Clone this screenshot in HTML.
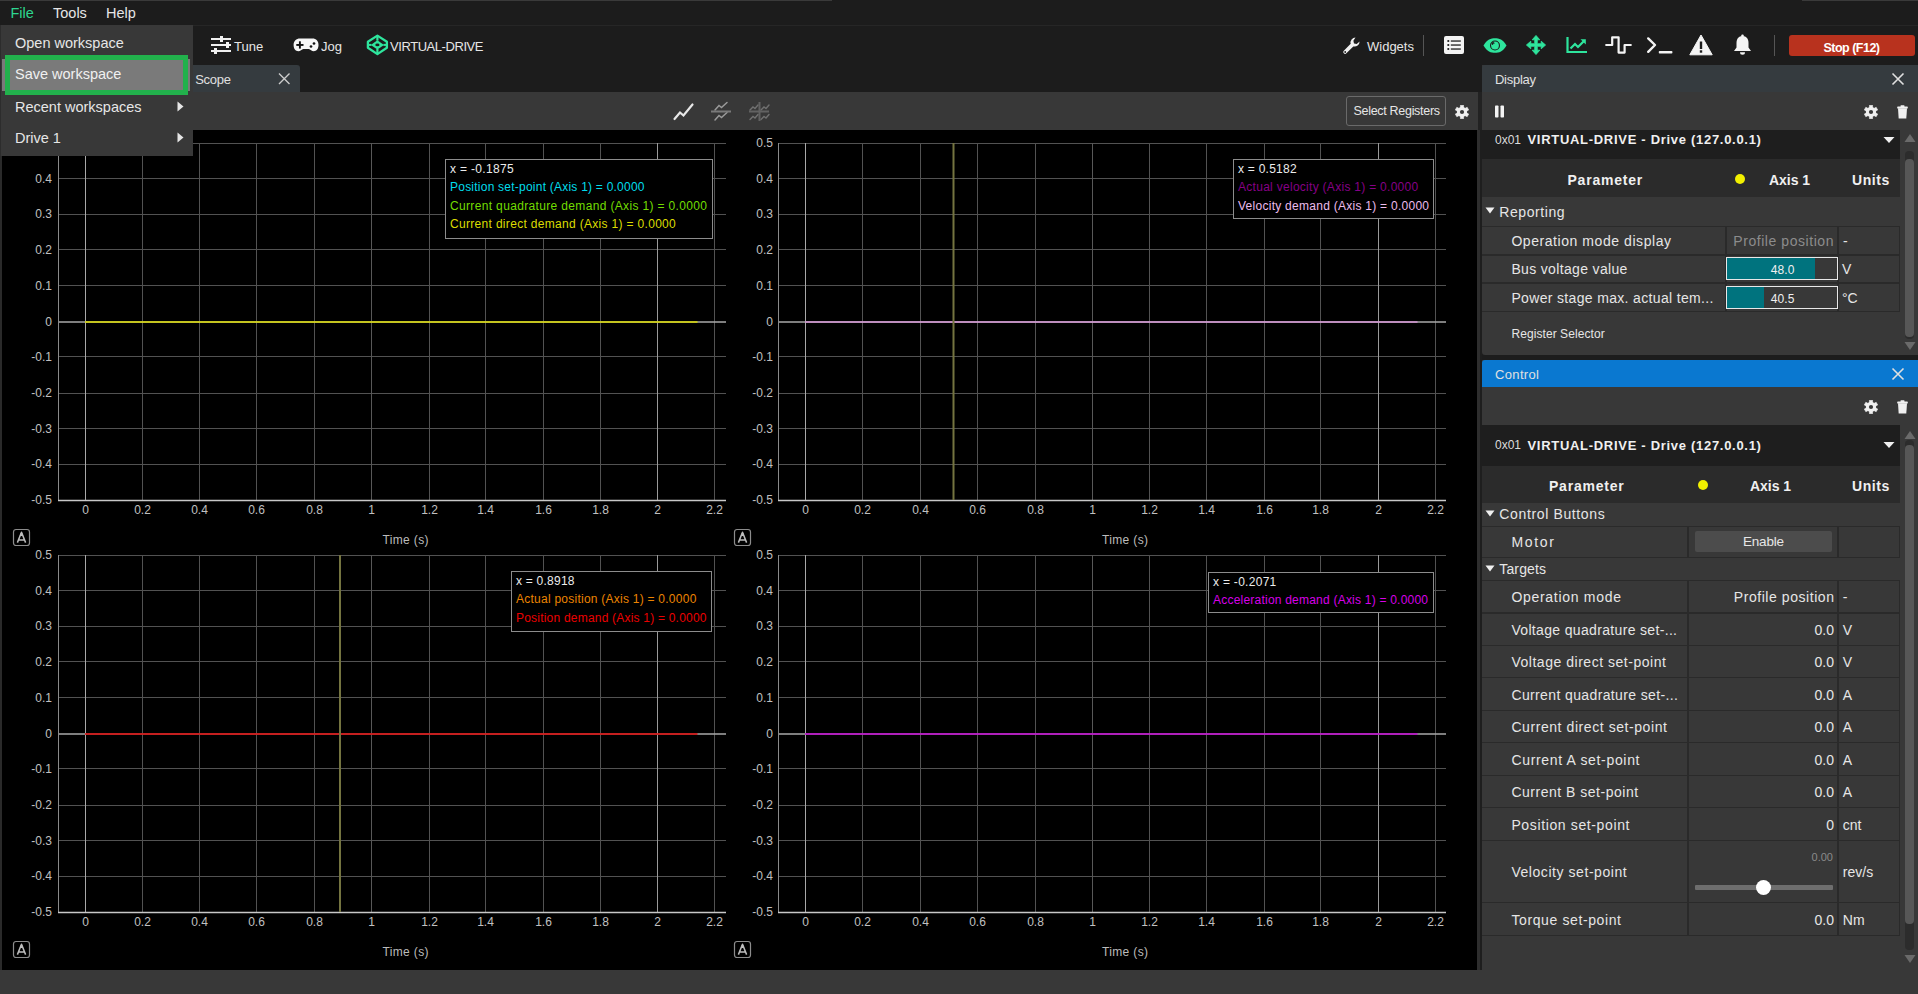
<!DOCTYPE html>
<html><head><meta charset="utf-8"><style>
html,body{margin:0;padding:0;}
body{width:1918px;height:994px;overflow:hidden;background:#1c1c1c;position:relative;font-family:"Liberation Sans", sans-serif;}
body>div{position:absolute;box-sizing:content-box;}
.t{white-space:nowrap;}
</style></head><body>
<div style="left:0px;top:0px;width:832px;height:1px;background:#3a3a3a;"></div><div style="left:1802px;top:0px;width:116px;height:1px;background:#3a3a3a;"></div><div style="left:0px;top:25px;width:1918px;height:1px;background:#262626;"></div><div style="left:0px;top:65px;width:300px;height:27px;background:#353b3f;border-top-right-radius:3px"></div><div style="left:0px;top:92px;width:1478px;height:38px;background:#383838;"></div><div style="left:0px;top:130px;width:1478px;height:840px;background:#000;"></div><div style="left:0px;top:130px;width:2px;height:840px;background:#2a2a2a;"></div><div style="left:1478px;top:92px;width:4px;height:38px;background:#222222;"></div><div style="left:1477px;top:130px;width:3px;height:840px;background:#2e2e2e;"></div><div style="left:1480px;top:130px;width:2px;height:840px;background:#1e1e1e;"></div><div style="left:0px;top:970px;width:1918px;height:24px;background:#383838;"></div><svg style="position:absolute;left:0px;top:0px;" width="1478" height="970" viewBox="0 0 1478 970"><line x1="58" y1="143.5" x2="726" y2="143.5" stroke="#525252" stroke-width="1"/><line x1="58" y1="178.5" x2="726" y2="178.5" stroke="#525252" stroke-width="1"/><line x1="58" y1="214.5" x2="726" y2="214.5" stroke="#525252" stroke-width="1"/><line x1="58" y1="249.5" x2="726" y2="249.5" stroke="#525252" stroke-width="1"/><line x1="58" y1="285.5" x2="726" y2="285.5" stroke="#525252" stroke-width="1"/><line x1="58" y1="356.5" x2="726" y2="356.5" stroke="#525252" stroke-width="1"/><line x1="58" y1="393.5" x2="726" y2="393.5" stroke="#525252" stroke-width="1"/><line x1="58" y1="428.5" x2="726" y2="428.5" stroke="#525252" stroke-width="1"/><line x1="58" y1="464.5" x2="726" y2="464.5" stroke="#525252" stroke-width="1"/><line x1="85.5" y1="143" x2="85.5" y2="500" stroke="#a8a8a8" stroke-width="1"/><line x1="142.5" y1="143" x2="142.5" y2="500" stroke="#525252" stroke-width="1"/><line x1="199.5" y1="143" x2="199.5" y2="500" stroke="#525252" stroke-width="1"/><line x1="256.5" y1="143" x2="256.5" y2="500" stroke="#525252" stroke-width="1"/><line x1="314.5" y1="143" x2="314.5" y2="500" stroke="#525252" stroke-width="1"/><line x1="371.5" y1="143" x2="371.5" y2="500" stroke="#585858" stroke-width="1"/><line x1="429.5" y1="143" x2="429.5" y2="500" stroke="#525252" stroke-width="1"/><line x1="485.5" y1="143" x2="485.5" y2="500" stroke="#525252" stroke-width="1"/><line x1="543.5" y1="143" x2="543.5" y2="500" stroke="#525252" stroke-width="1"/><line x1="600.5" y1="143" x2="600.5" y2="500" stroke="#525252" stroke-width="1"/><line x1="657.5" y1="143" x2="657.5" y2="500" stroke="#9a9a9a" stroke-width="1"/><line x1="714.5" y1="143" x2="714.5" y2="500" stroke="#525252" stroke-width="1"/><line x1="58" y1="322" x2="726" y2="322" stroke="#a8a8a8" stroke-width="1.7"/><line x1="58.5" y1="143" x2="58.5" y2="500" stroke="#8a8a8a" stroke-width="1"/><line x1="58" y1="500.5" x2="726" y2="500.5" stroke="#c8c8c8" stroke-width="1.5"/><line x1="85" y1="322" x2="697.5" y2="322" stroke="#dcdc00" stroke-width="1.7"/><line x1="778" y1="143.5" x2="1446" y2="143.5" stroke="#525252" stroke-width="1"/><line x1="778" y1="178.5" x2="1446" y2="178.5" stroke="#525252" stroke-width="1"/><line x1="778" y1="214.5" x2="1446" y2="214.5" stroke="#525252" stroke-width="1"/><line x1="778" y1="249.5" x2="1446" y2="249.5" stroke="#525252" stroke-width="1"/><line x1="778" y1="285.5" x2="1446" y2="285.5" stroke="#525252" stroke-width="1"/><line x1="778" y1="356.5" x2="1446" y2="356.5" stroke="#525252" stroke-width="1"/><line x1="778" y1="393.5" x2="1446" y2="393.5" stroke="#525252" stroke-width="1"/><line x1="778" y1="428.5" x2="1446" y2="428.5" stroke="#525252" stroke-width="1"/><line x1="778" y1="464.5" x2="1446" y2="464.5" stroke="#525252" stroke-width="1"/><line x1="805.5" y1="143" x2="805.5" y2="500" stroke="#a8a8a8" stroke-width="1"/><line x1="862.5" y1="143" x2="862.5" y2="500" stroke="#525252" stroke-width="1"/><line x1="920.5" y1="143" x2="920.5" y2="500" stroke="#525252" stroke-width="1"/><line x1="977.5" y1="143" x2="977.5" y2="500" stroke="#525252" stroke-width="1"/><line x1="1035.5" y1="143" x2="1035.5" y2="500" stroke="#525252" stroke-width="1"/><line x1="1092.5" y1="143" x2="1092.5" y2="500" stroke="#585858" stroke-width="1"/><line x1="1149.5" y1="143" x2="1149.5" y2="500" stroke="#525252" stroke-width="1"/><line x1="1206.5" y1="143" x2="1206.5" y2="500" stroke="#525252" stroke-width="1"/><line x1="1264.5" y1="143" x2="1264.5" y2="500" stroke="#525252" stroke-width="1"/><line x1="1320.5" y1="143" x2="1320.5" y2="500" stroke="#525252" stroke-width="1"/><line x1="1378.5" y1="143" x2="1378.5" y2="500" stroke="#9a9a9a" stroke-width="1"/><line x1="1435.5" y1="143" x2="1435.5" y2="500" stroke="#525252" stroke-width="1"/><line x1="778" y1="322" x2="1446" y2="322" stroke="#a8a8a8" stroke-width="1.7"/><line x1="778.5" y1="143" x2="778.5" y2="500" stroke="#8a8a8a" stroke-width="1"/><line x1="778" y1="500.5" x2="1446" y2="500.5" stroke="#c8c8c8" stroke-width="1.5"/><line x1="805" y1="322" x2="1417.5" y2="322" stroke="#d494d4" stroke-width="1.7"/><line x1="953.5" y1="143" x2="953.5" y2="500" stroke="#747440" stroke-width="2"/><line x1="58" y1="555.5" x2="726" y2="555.5" stroke="#525252" stroke-width="1"/><line x1="58" y1="590.5" x2="726" y2="590.5" stroke="#525252" stroke-width="1"/><line x1="58" y1="626.5" x2="726" y2="626.5" stroke="#525252" stroke-width="1"/><line x1="58" y1="661.5" x2="726" y2="661.5" stroke="#525252" stroke-width="1"/><line x1="58" y1="697.5" x2="726" y2="697.5" stroke="#525252" stroke-width="1"/><line x1="58" y1="768.5" x2="726" y2="768.5" stroke="#525252" stroke-width="1"/><line x1="58" y1="805.5" x2="726" y2="805.5" stroke="#525252" stroke-width="1"/><line x1="58" y1="840.5" x2="726" y2="840.5" stroke="#525252" stroke-width="1"/><line x1="58" y1="876.5" x2="726" y2="876.5" stroke="#525252" stroke-width="1"/><line x1="85.5" y1="555" x2="85.5" y2="912" stroke="#a8a8a8" stroke-width="1"/><line x1="142.5" y1="555" x2="142.5" y2="912" stroke="#525252" stroke-width="1"/><line x1="199.5" y1="555" x2="199.5" y2="912" stroke="#525252" stroke-width="1"/><line x1="256.5" y1="555" x2="256.5" y2="912" stroke="#525252" stroke-width="1"/><line x1="314.5" y1="555" x2="314.5" y2="912" stroke="#525252" stroke-width="1"/><line x1="371.5" y1="555" x2="371.5" y2="912" stroke="#585858" stroke-width="1"/><line x1="429.5" y1="555" x2="429.5" y2="912" stroke="#525252" stroke-width="1"/><line x1="485.5" y1="555" x2="485.5" y2="912" stroke="#525252" stroke-width="1"/><line x1="543.5" y1="555" x2="543.5" y2="912" stroke="#525252" stroke-width="1"/><line x1="600.5" y1="555" x2="600.5" y2="912" stroke="#525252" stroke-width="1"/><line x1="657.5" y1="555" x2="657.5" y2="912" stroke="#9a9a9a" stroke-width="1"/><line x1="714.5" y1="555" x2="714.5" y2="912" stroke="#525252" stroke-width="1"/><line x1="58" y1="734" x2="726" y2="734" stroke="#a8a8a8" stroke-width="1.7"/><line x1="58.5" y1="555" x2="58.5" y2="912" stroke="#8a8a8a" stroke-width="1"/><line x1="58" y1="912.5" x2="726" y2="912.5" stroke="#c8c8c8" stroke-width="1.5"/><line x1="85" y1="734" x2="697.5" y2="734" stroke="#dc0000" stroke-width="1.7"/><line x1="340" y1="555" x2="340" y2="912" stroke="#747440" stroke-width="2"/><line x1="778" y1="555.5" x2="1446" y2="555.5" stroke="#525252" stroke-width="1"/><line x1="778" y1="590.5" x2="1446" y2="590.5" stroke="#525252" stroke-width="1"/><line x1="778" y1="626.5" x2="1446" y2="626.5" stroke="#525252" stroke-width="1"/><line x1="778" y1="661.5" x2="1446" y2="661.5" stroke="#525252" stroke-width="1"/><line x1="778" y1="697.5" x2="1446" y2="697.5" stroke="#525252" stroke-width="1"/><line x1="778" y1="768.5" x2="1446" y2="768.5" stroke="#525252" stroke-width="1"/><line x1="778" y1="805.5" x2="1446" y2="805.5" stroke="#525252" stroke-width="1"/><line x1="778" y1="840.5" x2="1446" y2="840.5" stroke="#525252" stroke-width="1"/><line x1="778" y1="876.5" x2="1446" y2="876.5" stroke="#525252" stroke-width="1"/><line x1="805.5" y1="555" x2="805.5" y2="912" stroke="#a8a8a8" stroke-width="1"/><line x1="862.5" y1="555" x2="862.5" y2="912" stroke="#525252" stroke-width="1"/><line x1="920.5" y1="555" x2="920.5" y2="912" stroke="#525252" stroke-width="1"/><line x1="977.5" y1="555" x2="977.5" y2="912" stroke="#525252" stroke-width="1"/><line x1="1035.5" y1="555" x2="1035.5" y2="912" stroke="#525252" stroke-width="1"/><line x1="1092.5" y1="555" x2="1092.5" y2="912" stroke="#585858" stroke-width="1"/><line x1="1149.5" y1="555" x2="1149.5" y2="912" stroke="#525252" stroke-width="1"/><line x1="1206.5" y1="555" x2="1206.5" y2="912" stroke="#525252" stroke-width="1"/><line x1="1264.5" y1="555" x2="1264.5" y2="912" stroke="#525252" stroke-width="1"/><line x1="1320.5" y1="555" x2="1320.5" y2="912" stroke="#525252" stroke-width="1"/><line x1="1378.5" y1="555" x2="1378.5" y2="912" stroke="#9a9a9a" stroke-width="1"/><line x1="1435.5" y1="555" x2="1435.5" y2="912" stroke="#525252" stroke-width="1"/><line x1="778" y1="734" x2="1446" y2="734" stroke="#a8a8a8" stroke-width="1.7"/><line x1="778.5" y1="555" x2="778.5" y2="912" stroke="#8a8a8a" stroke-width="1"/><line x1="778" y1="912.5" x2="1446" y2="912.5" stroke="#c8c8c8" stroke-width="1.5"/><line x1="805" y1="734" x2="1417.5" y2="734" stroke="#c000d0" stroke-width="1.7"/></svg><div class="t" style="left:35.32px;top:134.00px;height:18px;line-height:18px;font-size:12px;color:#c0c0c0;font-weight:normal;">0.5</div><div class="t" style="left:35.32px;top:169.70px;height:18px;line-height:18px;font-size:12px;color:#c0c0c0;font-weight:normal;">0.4</div><div class="t" style="left:35.32px;top:205.40px;height:18px;line-height:18px;font-size:12px;color:#c0c0c0;font-weight:normal;">0.3</div><div class="t" style="left:35.32px;top:241.10px;height:18px;line-height:18px;font-size:12px;color:#c0c0c0;font-weight:normal;">0.2</div><div class="t" style="left:35.32px;top:276.80px;height:18px;line-height:18px;font-size:12px;color:#c0c0c0;font-weight:normal;">0.1</div><div class="t" style="left:45.33px;top:312.50px;height:18px;line-height:18px;font-size:12px;color:#c0c0c0;font-weight:normal;">0</div><div class="t" style="left:31.32px;top:348.20px;height:18px;line-height:18px;font-size:12px;color:#c0c0c0;font-weight:normal;">-0.1</div><div class="t" style="left:31.32px;top:383.90px;height:18px;line-height:18px;font-size:12px;color:#c0c0c0;font-weight:normal;">-0.2</div><div class="t" style="left:31.32px;top:419.60px;height:18px;line-height:18px;font-size:12px;color:#c0c0c0;font-weight:normal;">-0.3</div><div class="t" style="left:31.32px;top:455.30px;height:18px;line-height:18px;font-size:12px;color:#c0c0c0;font-weight:normal;">-0.4</div><div class="t" style="left:31.32px;top:491.00px;height:18px;line-height:18px;font-size:12px;color:#c0c0c0;font-weight:normal;">-0.5</div><div class="t" style="left:82.16px;top:500.50px;height:18px;line-height:18px;font-size:12px;color:#c0c0c0;font-weight:normal;">0</div><div class="t" style="left:134.16px;top:500.50px;height:18px;line-height:18px;font-size:12px;color:#c0c0c0;font-weight:normal;">0.2</div><div class="t" style="left:191.16px;top:500.50px;height:18px;line-height:18px;font-size:12px;color:#c0c0c0;font-weight:normal;">0.4</div><div class="t" style="left:248.16px;top:500.50px;height:18px;line-height:18px;font-size:12px;color:#c0c0c0;font-weight:normal;">0.6</div><div class="t" style="left:306.16px;top:500.50px;height:18px;line-height:18px;font-size:12px;color:#c0c0c0;font-weight:normal;">0.8</div><div class="t" style="left:368.16px;top:500.50px;height:18px;line-height:18px;font-size:12px;color:#c0c0c0;font-weight:normal;">1</div><div class="t" style="left:421.16px;top:500.50px;height:18px;line-height:18px;font-size:12px;color:#c0c0c0;font-weight:normal;">1.2</div><div class="t" style="left:477.16px;top:500.50px;height:18px;line-height:18px;font-size:12px;color:#c0c0c0;font-weight:normal;">1.4</div><div class="t" style="left:535.16px;top:500.50px;height:18px;line-height:18px;font-size:12px;color:#c0c0c0;font-weight:normal;">1.6</div><div class="t" style="left:592.16px;top:500.50px;height:18px;line-height:18px;font-size:12px;color:#c0c0c0;font-weight:normal;">1.8</div><div class="t" style="left:654.16px;top:500.50px;height:18px;line-height:18px;font-size:12px;color:#c0c0c0;font-weight:normal;">2</div><div class="t" style="left:706.16px;top:500.50px;height:18px;line-height:18px;font-size:12px;color:#c0c0c0;font-weight:normal;">2.2</div><div class="t" style="left:382.50px;top:530.50px;height:18px;line-height:18px;font-size:12px;color:#bcbcbc;font-weight:normal;letter-spacing:0.350px;">Time (s)</div><svg style="position:absolute;left:12px;top:528px;" width="19" height="19" viewBox="0 0 19 19"><rect x="1.5" y="1.5" width="16" height="16" rx="2.5" fill="none" stroke="#8c8c8c" stroke-width="1.2"/><path d="M5.4 14.6 L9.5 4.2 L13.6 14.6 M7 12 H12" fill="none" stroke="#bdbdbd" stroke-width="1.5" stroke-linejoin="round"/><path d="M8.3 5.5 H10.7 L11.2 8 H7.8 Z" fill="#bdbdbd"/></svg><div class="t" style="left:756.32px;top:134.00px;height:18px;line-height:18px;font-size:12px;color:#c0c0c0;font-weight:normal;">0.5</div><div class="t" style="left:756.32px;top:169.70px;height:18px;line-height:18px;font-size:12px;color:#c0c0c0;font-weight:normal;">0.4</div><div class="t" style="left:756.32px;top:205.40px;height:18px;line-height:18px;font-size:12px;color:#c0c0c0;font-weight:normal;">0.3</div><div class="t" style="left:756.32px;top:241.10px;height:18px;line-height:18px;font-size:12px;color:#c0c0c0;font-weight:normal;">0.2</div><div class="t" style="left:756.32px;top:276.80px;height:18px;line-height:18px;font-size:12px;color:#c0c0c0;font-weight:normal;">0.1</div><div class="t" style="left:766.33px;top:312.50px;height:18px;line-height:18px;font-size:12px;color:#c0c0c0;font-weight:normal;">0</div><div class="t" style="left:752.32px;top:348.20px;height:18px;line-height:18px;font-size:12px;color:#c0c0c0;font-weight:normal;">-0.1</div><div class="t" style="left:752.32px;top:383.90px;height:18px;line-height:18px;font-size:12px;color:#c0c0c0;font-weight:normal;">-0.2</div><div class="t" style="left:752.32px;top:419.60px;height:18px;line-height:18px;font-size:12px;color:#c0c0c0;font-weight:normal;">-0.3</div><div class="t" style="left:752.32px;top:455.30px;height:18px;line-height:18px;font-size:12px;color:#c0c0c0;font-weight:normal;">-0.4</div><div class="t" style="left:752.32px;top:491.00px;height:18px;line-height:18px;font-size:12px;color:#c0c0c0;font-weight:normal;">-0.5</div><div class="t" style="left:802.16px;top:500.50px;height:18px;line-height:18px;font-size:12px;color:#c0c0c0;font-weight:normal;">0</div><div class="t" style="left:854.16px;top:500.50px;height:18px;line-height:18px;font-size:12px;color:#c0c0c0;font-weight:normal;">0.2</div><div class="t" style="left:912.16px;top:500.50px;height:18px;line-height:18px;font-size:12px;color:#c0c0c0;font-weight:normal;">0.4</div><div class="t" style="left:969.16px;top:500.50px;height:18px;line-height:18px;font-size:12px;color:#c0c0c0;font-weight:normal;">0.6</div><div class="t" style="left:1027.16px;top:500.50px;height:18px;line-height:18px;font-size:12px;color:#c0c0c0;font-weight:normal;">0.8</div><div class="t" style="left:1089.16px;top:500.50px;height:18px;line-height:18px;font-size:12px;color:#c0c0c0;font-weight:normal;">1</div><div class="t" style="left:1141.16px;top:500.50px;height:18px;line-height:18px;font-size:12px;color:#c0c0c0;font-weight:normal;">1.2</div><div class="t" style="left:1198.16px;top:500.50px;height:18px;line-height:18px;font-size:12px;color:#c0c0c0;font-weight:normal;">1.4</div><div class="t" style="left:1256.16px;top:500.50px;height:18px;line-height:18px;font-size:12px;color:#c0c0c0;font-weight:normal;">1.6</div><div class="t" style="left:1312.16px;top:500.50px;height:18px;line-height:18px;font-size:12px;color:#c0c0c0;font-weight:normal;">1.8</div><div class="t" style="left:1375.16px;top:500.50px;height:18px;line-height:18px;font-size:12px;color:#c0c0c0;font-weight:normal;">2</div><div class="t" style="left:1427.16px;top:500.50px;height:18px;line-height:18px;font-size:12px;color:#c0c0c0;font-weight:normal;">2.2</div><div class="t" style="left:1102.00px;top:530.50px;height:18px;line-height:18px;font-size:12px;color:#bcbcbc;font-weight:normal;letter-spacing:0.350px;">Time (s)</div><svg style="position:absolute;left:733px;top:528px;" width="19" height="19" viewBox="0 0 19 19"><rect x="1.5" y="1.5" width="16" height="16" rx="2.5" fill="none" stroke="#8c8c8c" stroke-width="1.2"/><path d="M5.4 14.6 L9.5 4.2 L13.6 14.6 M7 12 H12" fill="none" stroke="#bdbdbd" stroke-width="1.5" stroke-linejoin="round"/><path d="M8.3 5.5 H10.7 L11.2 8 H7.8 Z" fill="#bdbdbd"/></svg><div class="t" style="left:35.32px;top:546.00px;height:18px;line-height:18px;font-size:12px;color:#c0c0c0;font-weight:normal;">0.5</div><div class="t" style="left:35.32px;top:581.70px;height:18px;line-height:18px;font-size:12px;color:#c0c0c0;font-weight:normal;">0.4</div><div class="t" style="left:35.32px;top:617.40px;height:18px;line-height:18px;font-size:12px;color:#c0c0c0;font-weight:normal;">0.3</div><div class="t" style="left:35.32px;top:653.10px;height:18px;line-height:18px;font-size:12px;color:#c0c0c0;font-weight:normal;">0.2</div><div class="t" style="left:35.32px;top:688.80px;height:18px;line-height:18px;font-size:12px;color:#c0c0c0;font-weight:normal;">0.1</div><div class="t" style="left:45.33px;top:724.50px;height:18px;line-height:18px;font-size:12px;color:#c0c0c0;font-weight:normal;">0</div><div class="t" style="left:31.32px;top:760.20px;height:18px;line-height:18px;font-size:12px;color:#c0c0c0;font-weight:normal;">-0.1</div><div class="t" style="left:31.32px;top:795.90px;height:18px;line-height:18px;font-size:12px;color:#c0c0c0;font-weight:normal;">-0.2</div><div class="t" style="left:31.32px;top:831.60px;height:18px;line-height:18px;font-size:12px;color:#c0c0c0;font-weight:normal;">-0.3</div><div class="t" style="left:31.32px;top:867.30px;height:18px;line-height:18px;font-size:12px;color:#c0c0c0;font-weight:normal;">-0.4</div><div class="t" style="left:31.32px;top:903.00px;height:18px;line-height:18px;font-size:12px;color:#c0c0c0;font-weight:normal;">-0.5</div><div class="t" style="left:82.16px;top:912.50px;height:18px;line-height:18px;font-size:12px;color:#c0c0c0;font-weight:normal;">0</div><div class="t" style="left:134.16px;top:912.50px;height:18px;line-height:18px;font-size:12px;color:#c0c0c0;font-weight:normal;">0.2</div><div class="t" style="left:191.16px;top:912.50px;height:18px;line-height:18px;font-size:12px;color:#c0c0c0;font-weight:normal;">0.4</div><div class="t" style="left:248.16px;top:912.50px;height:18px;line-height:18px;font-size:12px;color:#c0c0c0;font-weight:normal;">0.6</div><div class="t" style="left:306.16px;top:912.50px;height:18px;line-height:18px;font-size:12px;color:#c0c0c0;font-weight:normal;">0.8</div><div class="t" style="left:368.16px;top:912.50px;height:18px;line-height:18px;font-size:12px;color:#c0c0c0;font-weight:normal;">1</div><div class="t" style="left:421.16px;top:912.50px;height:18px;line-height:18px;font-size:12px;color:#c0c0c0;font-weight:normal;">1.2</div><div class="t" style="left:477.16px;top:912.50px;height:18px;line-height:18px;font-size:12px;color:#c0c0c0;font-weight:normal;">1.4</div><div class="t" style="left:535.16px;top:912.50px;height:18px;line-height:18px;font-size:12px;color:#c0c0c0;font-weight:normal;">1.6</div><div class="t" style="left:592.16px;top:912.50px;height:18px;line-height:18px;font-size:12px;color:#c0c0c0;font-weight:normal;">1.8</div><div class="t" style="left:654.16px;top:912.50px;height:18px;line-height:18px;font-size:12px;color:#c0c0c0;font-weight:normal;">2</div><div class="t" style="left:706.16px;top:912.50px;height:18px;line-height:18px;font-size:12px;color:#c0c0c0;font-weight:normal;">2.2</div><div class="t" style="left:382.50px;top:942.50px;height:18px;line-height:18px;font-size:12px;color:#bcbcbc;font-weight:normal;letter-spacing:0.350px;">Time (s)</div><svg style="position:absolute;left:12px;top:940px;" width="19" height="19" viewBox="0 0 19 19"><rect x="1.5" y="1.5" width="16" height="16" rx="2.5" fill="none" stroke="#8c8c8c" stroke-width="1.2"/><path d="M5.4 14.6 L9.5 4.2 L13.6 14.6 M7 12 H12" fill="none" stroke="#bdbdbd" stroke-width="1.5" stroke-linejoin="round"/><path d="M8.3 5.5 H10.7 L11.2 8 H7.8 Z" fill="#bdbdbd"/></svg><div class="t" style="left:756.32px;top:546.00px;height:18px;line-height:18px;font-size:12px;color:#c0c0c0;font-weight:normal;">0.5</div><div class="t" style="left:756.32px;top:581.70px;height:18px;line-height:18px;font-size:12px;color:#c0c0c0;font-weight:normal;">0.4</div><div class="t" style="left:756.32px;top:617.40px;height:18px;line-height:18px;font-size:12px;color:#c0c0c0;font-weight:normal;">0.3</div><div class="t" style="left:756.32px;top:653.10px;height:18px;line-height:18px;font-size:12px;color:#c0c0c0;font-weight:normal;">0.2</div><div class="t" style="left:756.32px;top:688.80px;height:18px;line-height:18px;font-size:12px;color:#c0c0c0;font-weight:normal;">0.1</div><div class="t" style="left:766.33px;top:724.50px;height:18px;line-height:18px;font-size:12px;color:#c0c0c0;font-weight:normal;">0</div><div class="t" style="left:752.32px;top:760.20px;height:18px;line-height:18px;font-size:12px;color:#c0c0c0;font-weight:normal;">-0.1</div><div class="t" style="left:752.32px;top:795.90px;height:18px;line-height:18px;font-size:12px;color:#c0c0c0;font-weight:normal;">-0.2</div><div class="t" style="left:752.32px;top:831.60px;height:18px;line-height:18px;font-size:12px;color:#c0c0c0;font-weight:normal;">-0.3</div><div class="t" style="left:752.32px;top:867.30px;height:18px;line-height:18px;font-size:12px;color:#c0c0c0;font-weight:normal;">-0.4</div><div class="t" style="left:752.32px;top:903.00px;height:18px;line-height:18px;font-size:12px;color:#c0c0c0;font-weight:normal;">-0.5</div><div class="t" style="left:802.16px;top:912.50px;height:18px;line-height:18px;font-size:12px;color:#c0c0c0;font-weight:normal;">0</div><div class="t" style="left:854.16px;top:912.50px;height:18px;line-height:18px;font-size:12px;color:#c0c0c0;font-weight:normal;">0.2</div><div class="t" style="left:912.16px;top:912.50px;height:18px;line-height:18px;font-size:12px;color:#c0c0c0;font-weight:normal;">0.4</div><div class="t" style="left:969.16px;top:912.50px;height:18px;line-height:18px;font-size:12px;color:#c0c0c0;font-weight:normal;">0.6</div><div class="t" style="left:1027.16px;top:912.50px;height:18px;line-height:18px;font-size:12px;color:#c0c0c0;font-weight:normal;">0.8</div><div class="t" style="left:1089.16px;top:912.50px;height:18px;line-height:18px;font-size:12px;color:#c0c0c0;font-weight:normal;">1</div><div class="t" style="left:1141.16px;top:912.50px;height:18px;line-height:18px;font-size:12px;color:#c0c0c0;font-weight:normal;">1.2</div><div class="t" style="left:1198.16px;top:912.50px;height:18px;line-height:18px;font-size:12px;color:#c0c0c0;font-weight:normal;">1.4</div><div class="t" style="left:1256.16px;top:912.50px;height:18px;line-height:18px;font-size:12px;color:#c0c0c0;font-weight:normal;">1.6</div><div class="t" style="left:1312.16px;top:912.50px;height:18px;line-height:18px;font-size:12px;color:#c0c0c0;font-weight:normal;">1.8</div><div class="t" style="left:1375.16px;top:912.50px;height:18px;line-height:18px;font-size:12px;color:#c0c0c0;font-weight:normal;">2</div><div class="t" style="left:1427.16px;top:912.50px;height:18px;line-height:18px;font-size:12px;color:#c0c0c0;font-weight:normal;">2.2</div><div class="t" style="left:1102.00px;top:942.50px;height:18px;line-height:18px;font-size:12px;color:#bcbcbc;font-weight:normal;letter-spacing:0.350px;">Time (s)</div><svg style="position:absolute;left:733px;top:940px;" width="19" height="19" viewBox="0 0 19 19"><rect x="1.5" y="1.5" width="16" height="16" rx="2.5" fill="none" stroke="#8c8c8c" stroke-width="1.2"/><path d="M5.4 14.6 L9.5 4.2 L13.6 14.6 M7 12 H12" fill="none" stroke="#bdbdbd" stroke-width="1.5" stroke-linejoin="round"/><path d="M8.3 5.5 H10.7 L11.2 8 H7.8 Z" fill="#bdbdbd"/></svg><div style="left:445px;top:159px;width:266px;height:78px;background:#000;border:1px solid #8c8c8c"></div><div class="t" style="left:450.00px;top:159.50px;height:18px;line-height:18px;font-size:12px;color:#ececec;font-weight:normal;letter-spacing:0.323px;">x = -0.1875</div><div class="t" style="left:450.00px;top:178.10px;height:18px;line-height:18px;font-size:12px;color:#00dcec;font-weight:normal;letter-spacing:0.230px;">Position set-point (Axis 1) = 0.0000</div><div class="t" style="left:450.00px;top:196.70px;height:18px;line-height:18px;font-size:12px;color:#72dc00;font-weight:normal;letter-spacing:0.346px;">Current quadrature demand (Axis 1) = 0.0000</div><div class="t" style="left:450.00px;top:215.30px;height:18px;line-height:18px;font-size:12px;color:#dcdc00;font-weight:normal;letter-spacing:0.316px;">Current direct demand (Axis 1) = 0.0000</div><div style="left:1233px;top:159px;width:199px;height:58px;background:#000;border:1px solid #8c8c8c"></div><div class="t" style="left:1238.00px;top:159.50px;height:18px;line-height:18px;font-size:12px;color:#ececec;font-weight:normal;letter-spacing:0.247px;">x = 0.5182</div><div class="t" style="left:1238.00px;top:178.10px;height:18px;line-height:18px;font-size:12px;color:#860086;font-weight:normal;letter-spacing:0.285px;">Actual velocity (Axis 1) = 0.0000</div><div class="t" style="left:1238.00px;top:196.70px;height:18px;line-height:18px;font-size:12px;color:#ecbcec;font-weight:normal;letter-spacing:0.268px;">Velocity demand (Axis 1) = 0.0000</div><div style="left:511px;top:571px;width:199px;height:59px;background:#000;border:1px solid #8c8c8c"></div><div class="t" style="left:516.00px;top:571.50px;height:18px;line-height:18px;font-size:12px;color:#ececec;font-weight:normal;letter-spacing:0.236px;">x = 0.8918</div><div class="t" style="left:516.00px;top:590.10px;height:18px;line-height:18px;font-size:12px;color:#ec8400;font-weight:normal;letter-spacing:0.246px;">Actual position (Axis 1) = 0.0000</div><div class="t" style="left:516.00px;top:608.70px;height:18px;line-height:18px;font-size:12px;color:#ec0000;font-weight:normal;letter-spacing:0.210px;">Position demand (Axis 1) = 0.0000</div><div style="left:1208px;top:572px;width:224px;height:39px;background:#000;border:1px solid #8c8c8c"></div><div class="t" style="left:1213.00px;top:572.50px;height:18px;line-height:18px;font-size:12px;color:#ececec;font-weight:normal;letter-spacing:0.292px;">x = -0.2071</div><div class="t" style="left:1213.00px;top:591.10px;height:18px;line-height:18px;font-size:12px;color:#d800e8;font-weight:normal;letter-spacing:0.219px;">Acceleration demand (Axis 1) = 0.0000</div><div class="t" style="left:10.50px;top:3.45px;height:20.5px;line-height:20.5px;font-size:14.5px;color:#2ed690;font-weight:normal;">File</div><div class="t" style="left:53.00px;top:3.45px;height:20.5px;line-height:20.5px;font-size:14.5px;color:#e6e6e6;font-weight:normal;">Tools</div><div class="t" style="left:106.00px;top:3.45px;height:20.5px;line-height:20.5px;font-size:14.5px;color:#e6e6e6;font-weight:normal;">Help</div><svg style="position:absolute;left:210px;top:35px;" width="22" height="20" viewBox="0 0 22 20"><g fill="#f0f0f0"><rect x="1" y="3" width="20" height="2"/><rect x="1" y="9" width="20" height="2"/><rect x="1" y="15" width="20" height="2"/><rect x="10" y="1" width="3" height="6"/><rect x="16" y="7" width="3" height="6"/><rect x="4" y="13" width="3" height="6"/></g></svg><div class="t" style="left:234.00px;top:36.50px;height:19px;line-height:19px;font-size:13px;color:#e6e6e6;font-weight:normal;">Tune</div><svg style="position:absolute;left:292px;top:37px;" width="28" height="16" viewBox="0 0 28 16"><path d="M8 1.6 H20.5 C24.2 1.6 26.5 4.2 26.5 8 C26.5 11.8 24.6 14.2 21.8 14.2 C19.6 14.2 18.4 12.4 16.8 11.9 H11.3 C9.7 12.4 8.5 14.2 6.3 14.2 C3.5 14.2 1.6 11.8 1.6 8 C1.6 4.2 4.2 1.6 8 1.6 Z" fill="#f6f6f6"/><rect x="4.3" y="7" width="7.2" height="1.9" fill="#111"/><rect x="6.95" y="4.3" width="1.9" height="7.3" fill="#111"/><circle cx="22" cy="6.5" r="1.35" fill="#111"/><circle cx="19" cy="9.5" r="1.35" fill="#111"/></svg><div class="t" style="left:321.00px;top:36.50px;height:19px;line-height:19px;font-size:13px;color:#e6e6e6;font-weight:normal;">Jog</div><svg style="position:absolute;left:365px;top:33px;" width="25" height="24" viewBox="0 0 25 24"><path d="M12.4 2.6 L21.9 8.8 V14.8 L12.4 21.1 L2.9 14.8 V8.8 Z" fill="none" stroke="#2ee59d" stroke-width="2.3" stroke-linejoin="round"/><path d="M5.8 11.9 L12.4 7.3 L19 11.9 L12.4 16.5 Z" fill="#2ee59d"/><rect x="11.3" y="2.6" width="2.2" height="5" fill="#2ee59d"/><rect x="11.3" y="16" width="2.2" height="5" fill="#2ee59d"/><rect x="2.9" y="10.9" width="3.5" height="2" fill="#2ee59d"/><rect x="18.4" y="10.9" width="3.5" height="2" fill="#2ee59d"/><ellipse cx="12.4" cy="11.9" rx="2.1" ry="1.3" fill="#1c1c1c"/></svg><div class="t" style="left:390.00px;top:36.50px;height:19px;line-height:19px;font-size:13px;color:#e6e6e6;font-weight:normal;letter-spacing:-0.435px;">VIRTUAL-DRIVE</div><svg style="position:absolute;left:1342px;top:36px;" width="20" height="20" viewBox="0 0 20 20"><path d="M13.5 1.5 a5 5 0 0 0 -4.8 6.3 L1.8 14.7 a1.8 1.8 0 0 0 2.6 2.6 L11.3 10.4 a5 5 0 0 0 6.3 -4.8 l-2.9 2.4 -2.7 -0.6 -0.6 -2.7 z" fill="#f0f0f0"/><circle cx="3.2" cy="16" r="0.9" fill="#1c1c1c"/></svg><div class="t" style="left:1367.00px;top:36.50px;height:19px;line-height:19px;font-size:13px;color:#e6e6e6;font-weight:normal;">Widgets</div><div style="left:1423px;top:35px;width:1px;height:21px;background:#555;"></div><svg style="position:absolute;left:1443px;top:35px;" width="22" height="20" viewBox="0 0 22 20"><rect x="1" y="1" width="20" height="18" rx="2" fill="#f4f4f4"/><g fill="#1c1c1c"><circle cx="5.3" cy="6" r="1.1"/><circle cx="5.3" cy="10" r="1.1"/><circle cx="5.3" cy="14" r="1.1"/></g><g fill="#505050"><rect x="7.8" y="5.2" width="10" height="1.7"/><rect x="7.8" y="9.2" width="10" height="1.7"/><rect x="7.8" y="13.2" width="10" height="1.7"/></g></svg><svg style="position:absolute;left:1482px;top:37px;" width="26" height="17" viewBox="0 0 26 17"><path d="M1.5 8.5 C5 2.2 9 1.2 13 1.2 C17 1.2 21 2.2 24.5 8.5 C21 14.8 17 15.8 13 15.8 C9 15.8 5 14.8 1.5 8.5 Z" fill="#2ee59d"/><circle cx="13" cy="8.5" r="5" fill="#1c1c1c"/><circle cx="13" cy="8.5" r="3.9" fill="#2ee59d"/><circle cx="11.1" cy="6.6" r="1.5" fill="#1c1c1c"/><circle cx="12.2" cy="7.7" r="1.2" fill="#2ee59d"/></svg><svg style="position:absolute;left:1525px;top:34px;" width="22" height="22" viewBox="0 0 22 22"><g fill="#2ee59d" stroke="#2ee59d" stroke-width="0.8" stroke-linejoin="round"><path d="M11 1.4 L14.8 5.8 H12.3 V9.7 H16.2 V7.2 L20.6 11 L16.2 14.8 V12.3 H12.3 V16.2 H14.8 L11 20.6 L7.2 16.2 H9.7 V12.3 H5.8 V14.8 L1.4 11 L5.8 7.2 V9.7 H9.7 V5.8 H7.2 Z"/></g></svg><svg style="position:absolute;left:1566px;top:36px;" width="22" height="18" viewBox="0 0 22 18"><g fill="none" stroke="#2ee59d" stroke-width="2.2"><path d="M1.5 1 V16 H21"/><path d="M4.5 12.5 L9 8 L12 11 L18 5"/></g><path d="M14.5 3.2 L19.8 3.2 L19.8 8.5 Z" fill="#2ee59d"/></svg><svg style="position:absolute;left:1605px;top:35px;" width="28" height="20" viewBox="0 0 28 20"><path d="M1.2 10 H7.2 V2.3 H13.6 V17.6 H19.6 V10 H25.8" fill="none" stroke="#f4f4f4" stroke-width="2.2" stroke-linejoin="round" stroke-linecap="round"/></svg><svg style="position:absolute;left:1646px;top:36px;" width="28" height="19" viewBox="0 0 28 19"><path d="M2.2 2.4 L9 9 L2.2 15.8" fill="none" stroke="#f4f4f4" stroke-width="2.4" stroke-linecap="round" stroke-linejoin="round"/><rect x="12.8" y="15" width="13.6" height="2.6" rx="0.8" fill="#f4f4f4"/></svg><svg style="position:absolute;left:1689px;top:34px;" width="24" height="22" viewBox="0 0 24 22"><path d="M12 1 L23.2 20.8 H0.8 Z" fill="#f4f4f4" stroke="#f4f4f4" stroke-width="1" stroke-linejoin="round"/><rect x="10.8" y="7.5" width="2.4" height="7.5" fill="#1c1c1c"/><rect x="10.8" y="16.3" width="2.4" height="2.4" fill="#1c1c1c"/></svg><svg style="position:absolute;left:1732px;top:34px;" width="21" height="22" viewBox="0 0 21 22"><path d="M10.5 2 C14.5 2 16.5 5 16.5 9 V13.5 L19 17 H2 L4.5 13.5 V9 C4.5 5 6.5 2 10.5 2 Z" fill="#f4f4f4"/><rect x="9.3" y="0.5" width="2.4" height="3" rx="1" fill="#f4f4f4"/><path d="M8 18.3 H13 A2.5 2.5 0 0 1 8 18.3 Z" fill="#f4f4f4"/></svg><div style="left:1774px;top:35px;width:1px;height:21px;background:#555;"></div><div style="left:1789px;top:35px;width:126px;height:21px;background:#b8321e;border-radius:3px;"></div><div class="t" style="left:1823.40px;top:38.75px;height:18.5px;line-height:18.5px;font-size:12.5px;color:#ffffff;font-weight:bold;letter-spacing:-0.501px;">Stop (F12)</div><div class="t" style="left:195.20px;top:70.00px;height:19px;line-height:19px;font-size:13px;color:#e0e0e0;font-weight:normal;letter-spacing:-0.265px;">Scope</div><svg style="position:absolute;left:276.5px;top:72px;" width="14" height="14" viewBox="0 0 14 14"><path d="M2 1.5 L12.5 12 M12.5 1.5 L2 12" stroke="#cccccc" stroke-width="1.4"/></svg><svg style="position:absolute;left:672px;top:100px;" width="24" height="22" viewBox="0 0 24 22"><path d="M2.5 19 L8 12.5 L11.5 15.5 L20.5 4.5" fill="none" stroke="#e8e8e8" stroke-width="2.2" stroke-linecap="round"/></svg><svg style="position:absolute;left:709px;top:100px;" width="26" height="22" viewBox="0 0 26 22"><g fill="none" stroke="#9a9a9a" stroke-width="1.5" stroke-linecap="round"><path d="M6 10 L10 5.5 L12.5 7.5 L18 2.5"/><path d="M6 20 L10 15.5 L12.5 17.5 L18 12.5"/></g><rect x="2" y="10.5" width="20" height="2" fill="#7a7a7a"/></svg><svg style="position:absolute;left:747px;top:100px;" width="26" height="22" viewBox="0 0 26 22"><g fill="none" stroke="#707070" stroke-width="1.4" stroke-linecap="round"><path d="M3 10 L6 7 L8 8.5 L11 5"/><path d="M14 10 L17 7 L19 8.5 L22 5"/><path d="M3 19.5 L6 16.5 L8 18 L11 14.5"/><path d="M14 19.5 L17 16.5 L19 18 L22 14.5"/></g><rect x="2" y="10.5" width="20" height="2" fill="#626262"/><rect x="11.5" y="2" width="2" height="19" fill="#626262"/></svg><div style="left:1346px;top:96px;width:98px;height:28px;border:1px solid #6a6a6a;border-radius:3px;"></div><div class="t" style="left:1353.50px;top:102.25px;height:18.5px;line-height:18.5px;font-size:12.5px;color:#e6e6e6;font-weight:normal;letter-spacing:-0.301px;">Select Registers</div><svg style="position:absolute;left:1455px;top:105px;" width="14" height="14" viewBox="0 0 14 14"><polygon points="5.37,2.68 5.47,0.17 8.53,0.17 8.63,2.68 9.93,3.43 12.15,2.26 13.68,4.91 11.56,6.25 11.56,7.75 13.68,9.09 12.15,11.74 9.93,10.57 8.63,11.32 8.53,13.83 5.47,13.83 5.37,11.32 4.07,10.57 1.85,11.74 0.32,9.09 2.44,7.75 2.44,6.25 0.32,4.91 1.85,2.26 4.07,3.43" fill="#f0f0f0" stroke="#f0f0f0" stroke-width="0.6" stroke-linejoin="round"/><circle cx="7.0" cy="7.0" r="4.97" fill="#f0f0f0"/><circle cx="7.0" cy="7.0" r="2.10" fill="#383838"/></svg><div style="left:1482px;top:65px;width:436px;height:290px;background:#383838;border-bottom-left-radius:3px"></div><div style="left:1482px;top:65px;width:436px;height:27px;background:#353b3f;border-top-left-radius:3px"></div><div class="t" style="left:1495.00px;top:69.70px;height:19px;line-height:19px;font-size:13px;color:#e0e0e0;font-weight:normal;letter-spacing:-0.270px;">Display</div><svg style="position:absolute;left:1891px;top:72px;" width="14" height="14" viewBox="0 0 14 14"><path d="M1.5 1.5 L12.5 12.5 M12.5 1.5 L1.5 12.5" stroke="#e0e0e0" stroke-width="1.6"/></svg><svg style="position:absolute;left:1494px;top:105px;" width="12" height="13" viewBox="0 0 12 13"><rect x="1" y="0.5" width="3.5" height="12" rx="0.8" fill="#f4f4f4"/><rect x="6.5" y="0.5" width="3.5" height="12" rx="0.8" fill="#f4f4f4"/></svg><svg style="position:absolute;left:1864px;top:105px;" width="14" height="14" viewBox="0 0 14 14"><polygon points="5.37,2.68 5.47,0.17 8.53,0.17 8.63,2.68 9.93,3.43 12.15,2.26 13.68,4.91 11.56,6.25 11.56,7.75 13.68,9.09 12.15,11.74 9.93,10.57 8.63,11.32 8.53,13.83 5.47,13.83 5.37,11.32 4.07,10.57 1.85,11.74 0.32,9.09 2.44,7.75 2.44,6.25 0.32,4.91 1.85,2.26 4.07,3.43" fill="#f0f0f0" stroke="#f0f0f0" stroke-width="0.6" stroke-linejoin="round"/><circle cx="7.0" cy="7.0" r="4.97" fill="#f0f0f0"/><circle cx="7.0" cy="7.0" r="2.10" fill="#383838"/></svg><svg style="position:absolute;left:1897px;top:104px;" width="11" height="15" viewBox="0 0 11 15"><g fill="#f0f0f0"><rect x="0.2" y="2.4" width="10.6" height="2.2" rx="0.7"/><rect x="3.5" y="1.2" width="4" height="2" rx="0.6"/><path d="M1 4.2 H10 L9.3 14.5 H1.7 Z"/></g></svg><div style="left:1482px;top:130px;width:418px;height:29px;background:#1e1e1e;"></div><div class="t" style="left:1495.00px;top:130.50px;height:18px;line-height:18px;font-size:12px;color:#dcdcdc;font-weight:normal;">0x01</div><div class="t" style="left:1527.50px;top:130.00px;height:19px;line-height:19px;font-size:13px;color:#f0f0f0;font-weight:bold;letter-spacing:0.702px;">VIRTUAL-DRIVE - Drive (127.0.0.1)</div><svg style="position:absolute;left:1883px;top:135.5px;" width="12" height="8" viewBox="0 0 12 8"><path d="M0.5 1 H11.5 L6 7 Z" fill="#f0f0f0"/></svg><div style="left:1482px;top:159px;width:418px;height:38px;background:#2b2b2b;"></div><div class="t" style="left:1567.50px;top:169.50px;height:20px;line-height:20px;font-size:14px;color:#f0f0f0;font-weight:bold;letter-spacing:0.776px;">Parameter</div><div style="left:1735px;top:174.0px;width:10px;height:10px;border-radius:5px;background:#f2f000"></div><div class="t" style="left:1769.00px;top:169.50px;height:20px;line-height:20px;font-size:14px;color:#f0f0f0;font-weight:bold;letter-spacing:-0.049px;">Axis 1</div><div class="t" style="left:1852.00px;top:169.50px;height:20px;line-height:20px;font-size:14px;color:#f0f0f0;font-weight:bold;letter-spacing:0.550px;">Units</div><div style="left:1482px;top:197px;width:418px;height:29px;background:#383838;"></div><svg style="position:absolute;left:1485px;top:207.0px;" width="10" height="7" viewBox="0 0 10 7"><path d="M0.5 0.5 H9.5 L5 6.5 Z" fill="#f0f0f0"/></svg><div class="t" style="left:1499.30px;top:201.50px;height:20px;line-height:20px;font-size:14px;color:#e6e6e6;font-weight:normal;letter-spacing:0.575px;">Reporting</div><div style="left:1482px;top:226px;width:418px;height:1px;background:#2a2a2a;"></div><div style="left:1482px;top:254px;width:418px;height:1px;background:#2a2a2a;"></div><div style="left:1725px;top:226px;width:2px;height:29px;background:#2a2a2a;"></div><div style="left:1837px;top:226px;width:2px;height:29px;background:#2a2a2a;"></div><div style="left:1899px;top:226px;width:1px;height:29px;background:#2a2a2a;"></div><div class="t" style="left:1511.40px;top:230.50px;height:20px;line-height:20px;font-size:14px;color:#e6e6e6;font-weight:normal;letter-spacing:0.559px;">Operation mode display</div><div class="t" style="left:1733.30px;top:230.50px;height:20px;line-height:20px;font-size:14px;color:#8c8c8c;font-weight:normal;letter-spacing:0.558px;">Profile position</div><div class="t" style="left:1843.00px;top:230.50px;height:20px;line-height:20px;font-size:14px;color:#e6e6e6;font-weight:normal;">-</div><div style="left:1482px;top:255px;width:418px;height:1px;background:#2a2a2a;"></div><div style="left:1482px;top:282px;width:418px;height:1px;background:#2a2a2a;"></div><div style="left:1725px;top:255px;width:2px;height:28px;background:#2a2a2a;"></div><div style="left:1837px;top:255px;width:2px;height:28px;background:#2a2a2a;"></div><div style="left:1899px;top:255px;width:1px;height:28px;background:#2a2a2a;"></div><div class="t" style="left:1511.40px;top:258.50px;height:20px;line-height:20px;font-size:14px;color:#e6e6e6;font-weight:normal;letter-spacing:0.343px;">Bus voltage value</div><div class="t" style="left:1842.00px;top:258.50px;height:20px;line-height:20px;font-size:14px;color:#e6e6e6;font-weight:normal;">V</div><div style="left:1482px;top:283px;width:418px;height:1px;background:#2a2a2a;"></div><div style="left:1482px;top:311px;width:418px;height:1px;background:#2a2a2a;"></div><div style="left:1725px;top:283px;width:2px;height:29px;background:#2a2a2a;"></div><div style="left:1837px;top:283px;width:2px;height:29px;background:#2a2a2a;"></div><div style="left:1899px;top:283px;width:1px;height:29px;background:#2a2a2a;"></div><div class="t" style="left:1511.40px;top:288.00px;height:20px;line-height:20px;font-size:14px;color:#e6e6e6;font-weight:normal;letter-spacing:0.338px;">Power stage max. actual tem...</div><div class="t" style="left:1842.00px;top:288.00px;height:20px;line-height:20px;font-size:14px;color:#e6e6e6;font-weight:normal;">&deg;C</div><div style="left:1726px;top:257px;width:110px;height:21px;border:1.5px solid #e8e8e8;background:#383838;overflow:hidden"><div style="position:absolute;left:0;top:0;width:87.5px;height:21px;background:#00737e"></div></div><div class="t" style="left:1770.70px;top:260.50px;height:18px;line-height:18px;font-size:12px;color:#f0f0f0;font-weight:normal;letter-spacing:0.148px;">48.0</div><div style="left:1726px;top:286px;width:110px;height:21px;border:1.5px solid #e8e8e8;background:#383838;overflow:hidden"><div style="position:absolute;left:0;top:0;width:36.5px;height:21px;background:#00737e"></div></div><div class="t" style="left:1770.70px;top:289.50px;height:18px;line-height:18px;font-size:12px;color:#f0f0f0;font-weight:normal;letter-spacing:0.148px;">40.5</div><div class="t" style="left:1511.40px;top:324.50px;height:18px;line-height:18px;font-size:12px;color:#e6e6e6;font-weight:normal;letter-spacing:0.079px;">Register Selector</div><svg style="position:absolute;left:1904px;top:133px;" width="12" height="10" viewBox="0 0 12 10"><path d="M0.5 9 L6 1 L11.5 9 Z" fill="#6a6a6a"/></svg><div style="left:1905px;top:151px;width:9px;height:188px;background:#2c2c2c;border-radius:4px"></div><div style="left:1905px;top:159px;width:9px;height:178px;background:#575757;border-radius:4px"></div><svg style="position:absolute;left:1904px;top:341px;" width="12" height="10" viewBox="0 0 12 10"><path d="M0.5 1 L6 9 L11.5 1 Z" fill="#6a6a6a"/></svg><div style="left:1482px;top:355px;width:436px;height:5px;background:#1c1c1c;"></div><div style="left:1482px;top:360px;width:436px;height:610px;background:#383838;"></div><div style="left:1482px;top:360px;width:436px;height:27px;background:#0a78d0;border-top-left-radius:3px"></div><div class="t" style="left:1495.00px;top:364.70px;height:19px;line-height:19px;font-size:13px;color:#e0e0e0;font-weight:normal;letter-spacing:0.349px;">Control</div><svg style="position:absolute;left:1891px;top:367px;" width="14" height="14" viewBox="0 0 14 14"><path d="M1.5 1.5 L12.5 12.5 M12.5 1.5 L1.5 12.5" stroke="#e0e0e0" stroke-width="1.6"/></svg><svg style="position:absolute;left:1864px;top:400px;" width="14" height="14" viewBox="0 0 14 14"><polygon points="5.37,2.68 5.47,0.17 8.53,0.17 8.63,2.68 9.93,3.43 12.15,2.26 13.68,4.91 11.56,6.25 11.56,7.75 13.68,9.09 12.15,11.74 9.93,10.57 8.63,11.32 8.53,13.83 5.47,13.83 5.37,11.32 4.07,10.57 1.85,11.74 0.32,9.09 2.44,7.75 2.44,6.25 0.32,4.91 1.85,2.26 4.07,3.43" fill="#f0f0f0" stroke="#f0f0f0" stroke-width="0.6" stroke-linejoin="round"/><circle cx="7.0" cy="7.0" r="4.97" fill="#f0f0f0"/><circle cx="7.0" cy="7.0" r="2.10" fill="#383838"/></svg><svg style="position:absolute;left:1897px;top:399px;" width="11" height="15" viewBox="0 0 11 15"><g fill="#f0f0f0"><rect x="0.2" y="2.4" width="10.6" height="2.2" rx="0.7"/><rect x="3.5" y="1.2" width="4" height="2" rx="0.6"/><path d="M1 4.2 H10 L9.3 14.5 H1.7 Z"/></g></svg><div style="left:1482px;top:425px;width:418px;height:41px;background:#1e1e1e;"></div><div class="t" style="left:1495.00px;top:436.00px;height:18px;line-height:18px;font-size:12px;color:#dcdcdc;font-weight:normal;">0x01</div><div class="t" style="left:1527.50px;top:435.50px;height:19px;line-height:19px;font-size:13px;color:#f0f0f0;font-weight:bold;letter-spacing:0.702px;">VIRTUAL-DRIVE - Drive (127.0.0.1)</div><svg style="position:absolute;left:1883px;top:441px;" width="12" height="8" viewBox="0 0 12 8"><path d="M0.5 1 H11.5 L6 7 Z" fill="#f0f0f0"/></svg><div style="left:1482px;top:466px;width:418px;height:37px;background:#2b2b2b;"></div><div class="t" style="left:1549.00px;top:475.50px;height:20px;line-height:20px;font-size:14px;color:#f0f0f0;font-weight:bold;letter-spacing:0.776px;">Parameter</div><div style="left:1697.5px;top:480.0px;width:10px;height:10px;border-radius:5px;background:#f2f000"></div><div class="t" style="left:1750.00px;top:475.50px;height:20px;line-height:20px;font-size:14px;color:#f0f0f0;font-weight:bold;letter-spacing:-0.049px;">Axis 1</div><div class="t" style="left:1852.00px;top:475.50px;height:20px;line-height:20px;font-size:14px;color:#f0f0f0;font-weight:bold;letter-spacing:0.550px;">Units</div><div style="left:1482px;top:503px;width:418px;height:23px;background:#383838;"></div><svg style="position:absolute;left:1485px;top:509.5px;" width="10" height="7" viewBox="0 0 10 7"><path d="M0.5 0.5 H9.5 L5 6.5 Z" fill="#f0f0f0"/></svg><div class="t" style="left:1499.30px;top:504.00px;height:20px;line-height:20px;font-size:14px;color:#e6e6e6;font-weight:normal;letter-spacing:0.636px;">Control Buttons</div><div style="left:1482px;top:526px;width:418px;height:1px;background:#2a2a2a;"></div><div style="left:1482px;top:557px;width:418px;height:1px;background:#2a2a2a;"></div><div style="left:1687px;top:526px;width:2px;height:32px;background:#2a2a2a;"></div><div style="left:1837px;top:526px;width:2px;height:32px;background:#2a2a2a;"></div><div style="left:1899px;top:526px;width:1px;height:32px;background:#2a2a2a;"></div><div class="t" style="left:1511.40px;top:531.50px;height:20px;line-height:20px;font-size:14px;color:#e6e6e6;font-weight:normal;letter-spacing:1.704px;">Motor</div><div style="left:1695px;top:531px;width:137px;height:21px;background:#4c4c4c;border-radius:2px"></div><div class="t" style="left:1743.00px;top:531.75px;height:19.5px;line-height:19.5px;font-size:13.5px;color:#e6e6e6;font-weight:normal;letter-spacing:-0.207px;">Enable</div><div style="left:1482px;top:558px;width:418px;height:22px;background:#383838;"></div><svg style="position:absolute;left:1485px;top:564.5px;" width="10" height="7" viewBox="0 0 10 7"><path d="M0.5 0.5 H9.5 L5 6.5 Z" fill="#f0f0f0"/></svg><div class="t" style="left:1499.30px;top:559.00px;height:20px;line-height:20px;font-size:14px;color:#e6e6e6;font-weight:normal;letter-spacing:0.132px;">Targets</div><div style="left:1482px;top:580px;width:418px;height:1px;background:#2a2a2a;"></div><div style="left:1482px;top:612px;width:418px;height:1px;background:#2a2a2a;"></div><div style="left:1687px;top:580px;width:2px;height:33px;background:#2a2a2a;"></div><div style="left:1837px;top:580px;width:2px;height:33px;background:#2a2a2a;"></div><div style="left:1899px;top:580px;width:1px;height:33px;background:#2a2a2a;"></div><div class="t" style="left:1511.40px;top:587.00px;height:20px;line-height:20px;font-size:14px;color:#e6e6e6;font-weight:normal;letter-spacing:0.708px;">Operation mode</div><div class="t" style="left:1733.80px;top:587.00px;height:20px;line-height:20px;font-size:14px;color:#e6e6e6;font-weight:normal;letter-spacing:0.558px;">Profile position</div><div class="t" style="left:1842.80px;top:587.00px;height:20px;line-height:20px;font-size:14px;color:#e6e6e6;font-weight:normal;">-</div><div style="left:1482px;top:613px;width:418px;height:1px;background:#2a2a2a;"></div><div style="left:1482px;top:645px;width:418px;height:1px;background:#2a2a2a;"></div><div style="left:1687px;top:613px;width:2px;height:33px;background:#2a2a2a;"></div><div style="left:1837px;top:613px;width:2px;height:33px;background:#2a2a2a;"></div><div style="left:1899px;top:613px;width:1px;height:33px;background:#2a2a2a;"></div><div class="t" style="left:1511.40px;top:620.00px;height:20px;line-height:20px;font-size:14px;color:#e6e6e6;font-weight:normal;letter-spacing:0.336px;">Voltage quadrature set-...</div><div class="t" style="left:1814.54px;top:620.00px;height:20px;line-height:20px;font-size:14px;color:#e6e6e6;font-weight:normal;">0.0</div><div class="t" style="left:1842.80px;top:620.00px;height:20px;line-height:20px;font-size:14px;color:#e6e6e6;font-weight:normal;">V</div><div style="left:1482px;top:645px;width:418px;height:1px;background:#2a2a2a;"></div><div style="left:1482px;top:677px;width:418px;height:1px;background:#2a2a2a;"></div><div style="left:1687px;top:645px;width:2px;height:33px;background:#2a2a2a;"></div><div style="left:1837px;top:645px;width:2px;height:33px;background:#2a2a2a;"></div><div style="left:1899px;top:645px;width:1px;height:33px;background:#2a2a2a;"></div><div class="t" style="left:1511.40px;top:652.00px;height:20px;line-height:20px;font-size:14px;color:#e6e6e6;font-weight:normal;letter-spacing:0.525px;">Voltage direct set-point</div><div class="t" style="left:1814.54px;top:652.00px;height:20px;line-height:20px;font-size:14px;color:#e6e6e6;font-weight:normal;">0.0</div><div class="t" style="left:1842.80px;top:652.00px;height:20px;line-height:20px;font-size:14px;color:#e6e6e6;font-weight:normal;">V</div><div style="left:1482px;top:677px;width:418px;height:1px;background:#2a2a2a;"></div><div style="left:1482px;top:710px;width:418px;height:1px;background:#2a2a2a;"></div><div style="left:1687px;top:677px;width:2px;height:34px;background:#2a2a2a;"></div><div style="left:1837px;top:677px;width:2px;height:34px;background:#2a2a2a;"></div><div style="left:1899px;top:677px;width:1px;height:34px;background:#2a2a2a;"></div><div class="t" style="left:1511.40px;top:684.50px;height:20px;line-height:20px;font-size:14px;color:#e6e6e6;font-weight:normal;letter-spacing:0.377px;">Current quadrature set-...</div><div class="t" style="left:1814.54px;top:684.50px;height:20px;line-height:20px;font-size:14px;color:#e6e6e6;font-weight:normal;">0.0</div><div class="t" style="left:1842.80px;top:684.50px;height:20px;line-height:20px;font-size:14px;color:#e6e6e6;font-weight:normal;">A</div><div style="left:1482px;top:710px;width:418px;height:1px;background:#2a2a2a;"></div><div style="left:1482px;top:742px;width:418px;height:1px;background:#2a2a2a;"></div><div style="left:1687px;top:710px;width:2px;height:33px;background:#2a2a2a;"></div><div style="left:1837px;top:710px;width:2px;height:33px;background:#2a2a2a;"></div><div style="left:1899px;top:710px;width:1px;height:33px;background:#2a2a2a;"></div><div class="t" style="left:1511.40px;top:717.00px;height:20px;line-height:20px;font-size:14px;color:#e6e6e6;font-weight:normal;letter-spacing:0.570px;">Current direct set-point</div><div class="t" style="left:1814.54px;top:717.00px;height:20px;line-height:20px;font-size:14px;color:#e6e6e6;font-weight:normal;">0.0</div><div class="t" style="left:1842.80px;top:717.00px;height:20px;line-height:20px;font-size:14px;color:#e6e6e6;font-weight:normal;">A</div><div style="left:1482px;top:742px;width:418px;height:1px;background:#2a2a2a;"></div><div style="left:1482px;top:775px;width:418px;height:1px;background:#2a2a2a;"></div><div style="left:1687px;top:742px;width:2px;height:34px;background:#2a2a2a;"></div><div style="left:1837px;top:742px;width:2px;height:34px;background:#2a2a2a;"></div><div style="left:1899px;top:742px;width:1px;height:34px;background:#2a2a2a;"></div><div class="t" style="left:1511.40px;top:749.50px;height:20px;line-height:20px;font-size:14px;color:#e6e6e6;font-weight:normal;letter-spacing:0.675px;">Current A set-point</div><div class="t" style="left:1814.54px;top:749.50px;height:20px;line-height:20px;font-size:14px;color:#e6e6e6;font-weight:normal;">0.0</div><div class="t" style="left:1842.80px;top:749.50px;height:20px;line-height:20px;font-size:14px;color:#e6e6e6;font-weight:normal;">A</div><div style="left:1482px;top:775px;width:418px;height:1px;background:#2a2a2a;"></div><div style="left:1482px;top:807px;width:418px;height:1px;background:#2a2a2a;"></div><div style="left:1687px;top:775px;width:2px;height:33px;background:#2a2a2a;"></div><div style="left:1837px;top:775px;width:2px;height:33px;background:#2a2a2a;"></div><div style="left:1899px;top:775px;width:1px;height:33px;background:#2a2a2a;"></div><div class="t" style="left:1511.40px;top:782.00px;height:20px;line-height:20px;font-size:14px;color:#e6e6e6;font-weight:normal;letter-spacing:0.511px;">Current B set-point</div><div class="t" style="left:1814.54px;top:782.00px;height:20px;line-height:20px;font-size:14px;color:#e6e6e6;font-weight:normal;">0.0</div><div class="t" style="left:1842.80px;top:782.00px;height:20px;line-height:20px;font-size:14px;color:#e6e6e6;font-weight:normal;">A</div><div style="left:1482px;top:807px;width:418px;height:1px;background:#2a2a2a;"></div><div style="left:1482px;top:840px;width:418px;height:1px;background:#2a2a2a;"></div><div style="left:1687px;top:807px;width:2px;height:34px;background:#2a2a2a;"></div><div style="left:1837px;top:807px;width:2px;height:34px;background:#2a2a2a;"></div><div style="left:1899px;top:807px;width:1px;height:34px;background:#2a2a2a;"></div><div class="t" style="left:1511.40px;top:814.50px;height:20px;line-height:20px;font-size:14px;color:#e6e6e6;font-weight:normal;letter-spacing:0.630px;">Position set-point</div><div class="t" style="left:1826.21px;top:814.50px;height:20px;line-height:20px;font-size:14px;color:#e6e6e6;font-weight:normal;">0</div><div class="t" style="left:1842.80px;top:814.50px;height:20px;line-height:20px;font-size:14px;color:#e6e6e6;font-weight:normal;">cnt</div><div style="left:1482px;top:840px;width:418px;height:1px;background:#2a2a2a;"></div><div style="left:1482px;top:902px;width:418px;height:1px;background:#2a2a2a;"></div><div style="left:1687px;top:840px;width:2px;height:63px;background:#2a2a2a;"></div><div style="left:1837px;top:840px;width:2px;height:63px;background:#2a2a2a;"></div><div style="left:1899px;top:840px;width:1px;height:63px;background:#2a2a2a;"></div><div class="t" style="left:1511.40px;top:862.00px;height:20px;line-height:20px;font-size:14px;color:#e6e6e6;font-weight:normal;letter-spacing:0.557px;">Velocity set-point</div><div class="t" style="left:1842.80px;top:862.00px;height:20px;line-height:20px;font-size:14px;color:#e6e6e6;font-weight:normal;">rev/s</div><div style="left:1482px;top:902px;width:418px;height:1px;background:#2a2a2a;"></div><div style="left:1482px;top:935px;width:418px;height:1px;background:#2a2a2a;"></div><div style="left:1687px;top:902px;width:2px;height:34px;background:#2a2a2a;"></div><div style="left:1837px;top:902px;width:2px;height:34px;background:#2a2a2a;"></div><div style="left:1899px;top:902px;width:1px;height:34px;background:#2a2a2a;"></div><div class="t" style="left:1511.40px;top:909.50px;height:20px;line-height:20px;font-size:14px;color:#e6e6e6;font-weight:normal;letter-spacing:0.614px;">Torque set-point</div><div class="t" style="left:1814.54px;top:909.50px;height:20px;line-height:20px;font-size:14px;color:#e6e6e6;font-weight:normal;">0.0</div><div class="t" style="left:1842.80px;top:909.50px;height:20px;line-height:20px;font-size:14px;color:#e6e6e6;font-weight:normal;">Nm</div><div class="t" style="left:1811.59px;top:849.00px;height:17px;line-height:17px;font-size:11px;color:#8a8a8a;font-weight:normal;">0.00</div><div style="left:1695px;top:885px;width:138px;height:5px;background:#6e6e6e;border-radius:1px"></div><div style="left:1756px;top:880px;width:15px;height:15px;border-radius:8px;background:#ffffff"></div><svg style="position:absolute;left:1904px;top:430px;" width="12" height="10" viewBox="0 0 12 10"><path d="M0.5 9 L6 1 L11.5 9 Z" fill="#6a6a6a"/></svg><div style="left:1905px;top:440px;width:9px;height:510px;background:#2c2c2c;border-radius:4px"></div><div style="left:1905px;top:445px;width:9px;height:479px;background:#575757;border-radius:4px"></div><svg style="position:absolute;left:1904px;top:954px;" width="12" height="10" viewBox="0 0 12 10"><path d="M0.5 1 L6 9 L11.5 1 Z" fill="#6a6a6a"/></svg><div style="left:0px;top:25px;width:193px;height:131px;background:#383838;"></div><div style="left:0px;top:25px;width:1px;height:131px;background:#2c2c2c;"></div><div class="t" style="left:15.00px;top:33.45px;height:20.5px;line-height:20.5px;font-size:14.5px;color:#e6e6e6;font-weight:normal;">Open workspace</div><div style="left:2px;top:59px;width:188px;height:32px;background:#7a7a7a;"></div><div style="left:5px;top:55px;width:173px;height:30px;border:5px solid #22b14c"></div><div class="t" style="left:15.00px;top:64.45px;height:20.5px;line-height:20.5px;font-size:14.5px;color:#f0f0f0;font-weight:normal;">Save workspace</div><div class="t" style="left:15.00px;top:96.75px;height:20.5px;line-height:20.5px;font-size:14.5px;color:#e6e6e6;font-weight:normal;">Recent workspaces</div><svg style="position:absolute;left:177px;top:101px;" width="7" height="11" viewBox="0 0 7 11"><path d="M0.5 0.5 L6.5 5.5 L0.5 10.5 Z" fill="#e6e6e6"/></svg><div class="t" style="left:15.00px;top:127.75px;height:20.5px;line-height:20.5px;font-size:14.5px;color:#e6e6e6;font-weight:normal;">Drive 1</div><svg style="position:absolute;left:177px;top:132px;" width="7" height="11" viewBox="0 0 7 11"><path d="M0.5 0.5 L6.5 5.5 L0.5 10.5 Z" fill="#e6e6e6"/></svg>
</body></html>
